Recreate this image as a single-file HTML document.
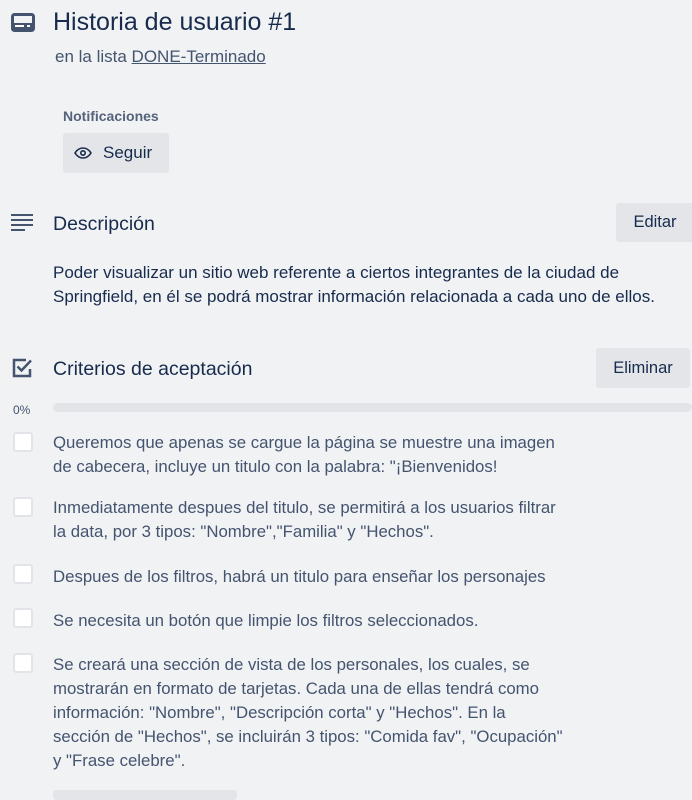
<!DOCTYPE html>
<html><head><meta charset="utf-8"><style>
body{margin:0;width:692px;height:793px;background:#f1f2f4;font-family:"Liberation Sans",sans-serif;color:#172b4d;position:relative;overflow:hidden}
.a{position:absolute;white-space:nowrap}
.t{font-size:17px;line-height:24px;color:#44546f}
.btn{position:absolute;background:#e3e5e8;border-radius:3px;font-size:16.5px;color:#172b4d;display:flex;align-items:center;justify-content:center}
.cb{position:absolute;left:13px;width:16px;height:16px;background:#fff;border:2px solid #e2e4e8;border-radius:3px}
.ct{position:absolute;left:53px;font-size:16.8px;line-height:24px;color:#44546f;white-space:nowrap}
</style></head><body>
<svg class="a" style="left:11px;top:13px" width="24" height="20" viewBox="0 0 24 20"><rect x="1.5" y="1.5" width="21" height="16" rx="2" fill="none" stroke="#44546f" stroke-width="3"/><rect x="2" y="10" width="20" height="7" fill="#44546f"/><rect x="4" y="12" width="9" height="2" fill="#fff"/><rect x="16" y="12" width="3" height="2" fill="#fff"/></svg>
<div class="a" style="left:53px;top:8px;font-size:25px;color:#172b4d">Historia de usuario #1</div>
<div class="a t" style="left:55px;top:45px">en la lista <span style="text-decoration:underline">DONE-Terminado</span></div>
<div class="a" style="left:63px;top:108px;font-size:14px;color:#44546f;font-weight:bold;opacity:.9">Notificaciones</div>
<div class="btn" style="left:63px;top:133px;width:106px;height:40px;justify-content:flex-start"><svg style="margin-left:11px" width="18" height="12" viewBox="0 0 18 12"><path d="M1 6C3.5 2 6 1 9 1s5.5 1 8 5c-2.5 4-5 5-8 5S3.5 10 1 6z" fill="none" stroke="#172b4d" stroke-width="1.6"/><circle cx="9" cy="6" r="2.2" fill="none" stroke="#172b4d" stroke-width="1.6"/></svg><span style="margin-left:11px;font-size:17px">Seguir</span></div>
<svg class="a" style="left:11px;top:214px" width="24" height="18" viewBox="0 0 24 18"><rect x="0" y="0" width="22" height="2" fill="#44546f"/><rect x="0" y="5" width="22" height="2" fill="#44546f"/><rect x="0" y="10" width="22" height="2" fill="#44546f"/><rect x="0" y="15" width="14" height="2" fill="#44546f"/></svg>
<div class="a" style="left:53px;top:213px;font-size:19.5px">Descripción</div>
<div class="btn" style="left:616px;top:203px;width:78px;height:39px">Editar</div>
<div class="a t" style="left:53px;top:261px;color:#172b4d">Poder visualizar un sitio web referente a ciertos integrantes de la ciudad de<br>Springfield, en él se podrá mostrar información relacionada a cada uno de ellos.</div>
<svg class="a" style="left:12px;top:358px" width="22" height="20" viewBox="0 0 22 20"><path d="M14 2H2v16h16v-7" fill="none" stroke="#44546f" stroke-width="2.5"/><path d="M5.5 8.5l4 4L19 2.5" fill="none" stroke="#44546f" stroke-width="2.5"/></svg>
<div class="a" style="left:53px;top:358px;font-size:19.5px">Criterios de aceptación</div>
<div class="btn" style="left:596px;top:348px;width:94px;height:40px">Eliminar</div>
<div class="a" style="left:13px;top:403px;font-size:12px;color:#44546f">0%</div>
<div class="a" style="left:53px;top:403px;width:639px;height:9px;border-radius:5px;background:#e2e4e8"></div>
<div class="cb" style="top:432px"></div><div class="ct" style="top:431px">Queremos que apenas se cargue la página se muestre una imagen<br>de cabecera, incluye un titulo con la palabra: "¡Bienvenidos!</div>
<div class="cb" style="top:497px"></div><div class="ct" style="top:496px">Inmediatamente despues del titulo, se permitirá a los usuarios filtrar<br>la data, por 3 tipos: "Nombre","Familia" y "Hechos".</div>
<div class="cb" style="top:564px"></div><div class="ct" style="top:565px">Despues de los filtros, habrá un titulo para enseñar los personajes</div>
<div class="cb" style="top:608px"></div><div class="ct" style="top:609px">Se necesita un botón que limpie los filtros seleccionados.</div>
<div class="cb" style="top:653px"></div><div class="ct" style="top:653px">Se creará una sección de vista de los personales, los cuales, se<br>mostrarán en formato de tarjetas. Cada una de ellas tendrá como<br>información: "Nombre", "Descripción corta" y "Hechos". En la<br>sección de "Hechos", se incluirán 3 tipos: "Comida fav", "Ocupación"<br>y "Frase celebre".</div>
<div class="a" style="left:53px;top:790px;width:184px;height:10px;background:#e3e5e8;border-radius:3px"></div>
</body></html>
